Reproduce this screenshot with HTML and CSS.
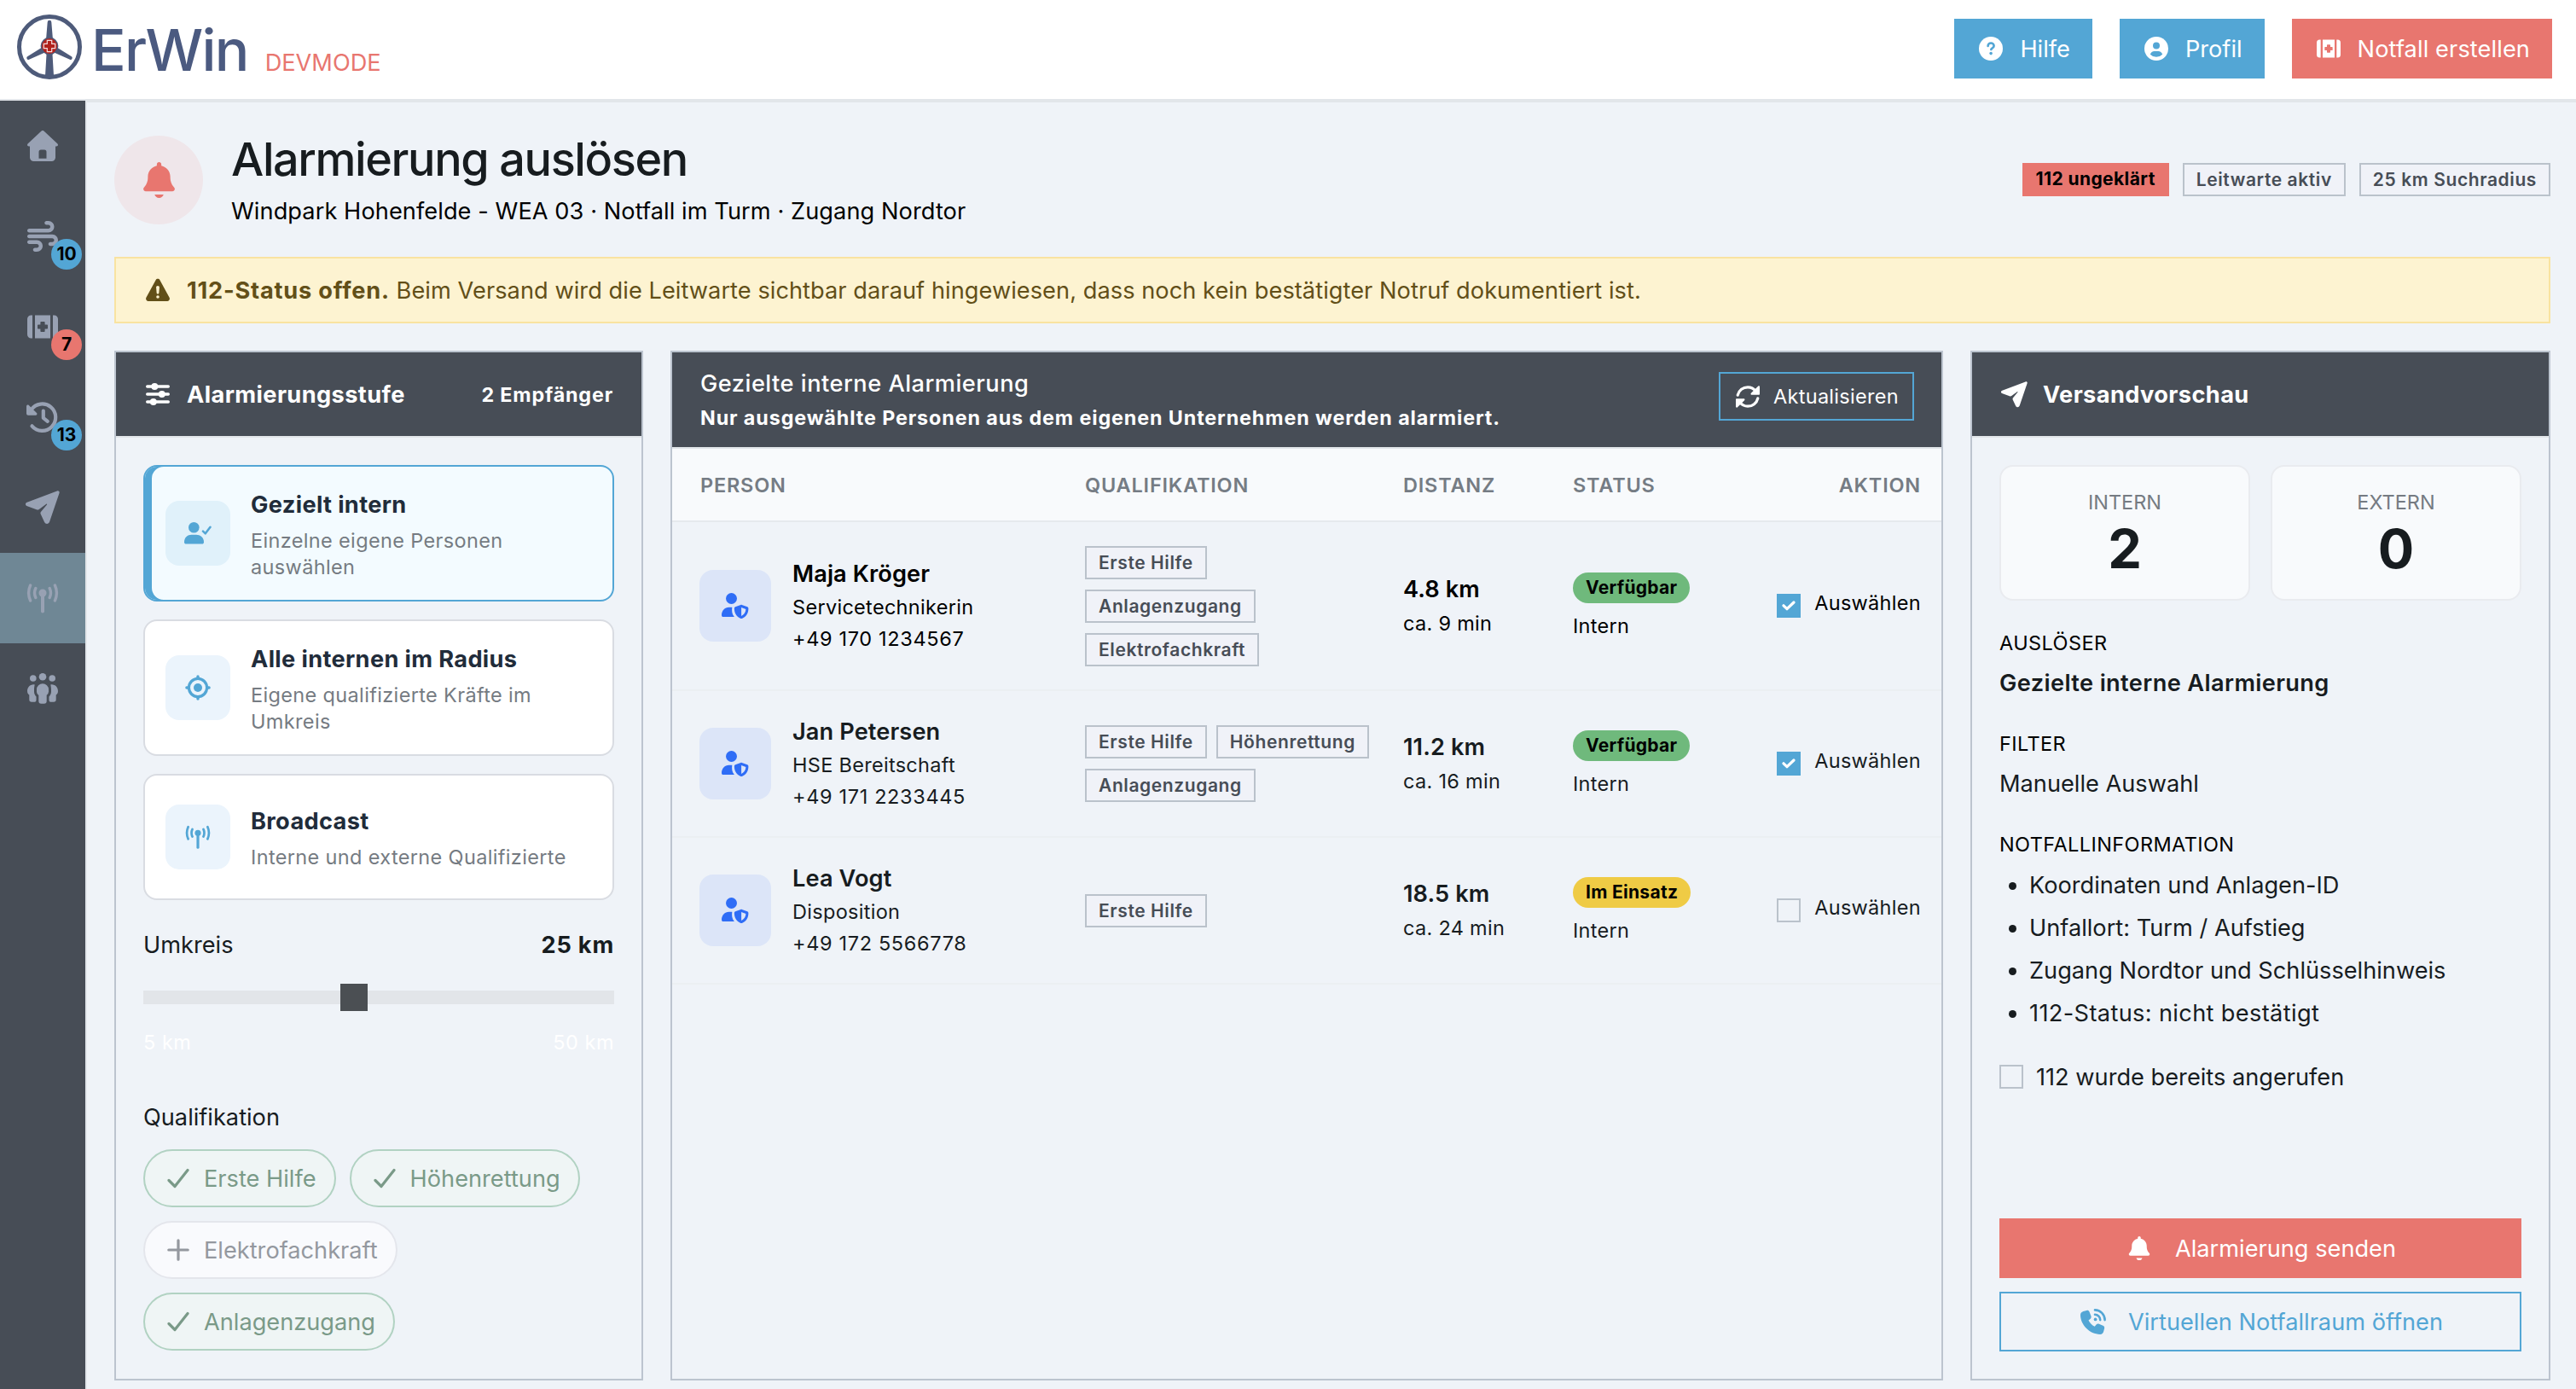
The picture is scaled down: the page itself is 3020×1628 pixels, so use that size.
FILE: index.html
```html
<!DOCTYPE html>
<html lang="de">
<head>
  <meta charset="UTF-8" />
  <meta name="viewport" content="width=device-width, initial-scale=1" />
  <title>ErWin - Alarmierung auslösen</title>
  <link rel="stylesheet" href="styles.css">
</head>
<body>

  <!-- Icons -->
  <svg class="sprite" xmlns="http://www.w3.org/2000/svg">
    <symbol id="i-bell" viewBox="0 0 448 512"><path d="M224 0c-17.7 0-32 14.3-32 32V51.2C119 66 64 130.6 64 208v18.8c0 47-17.3 92.4-48.5 127.6l-7.4 8.3c-8.4 9.4-10.4 22.9-5.3 34.4S19.4 416 32 416H416c12.6 0 24-7.4 29.2-18.9s3.1-25-5.3-34.4l-7.4-8.3C401.3 319.2 384 273.9 384 226.8V208c0-77.4-55-142-128-156.8V32c0-17.7-14.3-32-32-32zM288 464H160c7 28 32 48 64 48s57-20 64-48z"/></symbol>
    <symbol id="i-home" viewBox="0 0 36 36"><path fill-rule="evenodd" d="M16.6.6a2 2 0 0 1 2.8 0l15.8 14.7c1.5 1.4.6 3.2-1 3.2H33V31.500a4.500 4.500 0 0 1-4.500 4.500h-21A4.500 4.500 0 0 1 3 31.500V18.500H1.800c-1.600 0-2.500-1.800-1-3.200zM16 22.500a2.500 2.500 0 0 0-2.500 2.500v7.700h9V25a2.500 2.500 0 0 0-2.500-2.500z"/></symbol>
    <symbol id="i-wind" viewBox="0 0 512 512"><path d="M288 32c0 17.700 14.300 32 32 32h32c17.700 0 32 14.300 32 32s-14.300 32-32 32H32c-17.700 0-32 14.300-32 32s14.300 32 32 32H352c53 0 96-43 96-96s-43-96-96-96H320c-17.700 0-32 14.300-32 32zm64 352c0 17.700 14.300 32 32 32h32c53 0 96-43 96-96s-43-96-96-96H32c-17.700 0-32 14.300-32 32s14.300 32 32 32H416c17.700 0 32 14.300 32 32s-14.300 32-32 32H384c-17.700 0-32 14.300-32 32zM128 512h32c53 0 96-43 96-96s-43-96-96-96H32c-17.700 0-32 14.300-32 32s14.300 32 32 32H160c17.700 0 32 14.300 32 32s-14.300 32-32 32H128c-17.700 0-32 14.300-32 32s14.300 32 32 32z"/></symbol>
    <symbol id="i-kit" viewBox="0 0 36 36"><path fill-rule="evenodd" d="M6 4.500H4.500A4.500 4.500 0 0 0 0 9v18a4.500 4.500 0 0 0 4.500 4.500H6zM30 4.500h1.500A4.500 4.500 0 0 1 36 9v18a4.500 4.500 0 0 1-4.500 4.500H30zM9 4.500h18v27H9zM16.200 12a.8.8 0 0 0-.8.8v2.600h-2.600a.8.8 0 0 0-.8.8v3.600c0 .5.300.8.8.8h2.600v2.600c0 .5.300.8.8.8h3.600c.5 0 .8-.3.8-.8v-2.600h2.600c.5 0 .8-.3.8-.8v-3.600a.8.8 0 0 0-.8-.8h-2.600v-2.600a.8.8 0 0 0-.8-.8z"/></symbol>
    <symbol id="i-history" viewBox="0 0 38 36"><g fill="none" stroke="currentColor" stroke-width="4.200" stroke-linecap="round" stroke-linejoin="round"><path d="M6.500 28.300a15.700 15.700 0 1 0-.8-19.200L3 13"/><path d="M19.800 10.500v8.300l5 4"/></g><path d="M0 5.200c0-1.500 1.800-2.200 2.800-1.200L12 13c1 1 .3 2.800-1.200 2.800H2a2 2 0 0 1-2-2z"/></symbol>
    <symbol id="i-plane" viewBox="0 0 40 40"><path d="M36.900.5c1.800-.7 3.200.7 2.600 2.400l-11.400 33.600c-1 3-4.600 3.200-6 .5l-4.400-9.400c-.5-1-.3-2 .4-2.900l6.900-8.200c.4-.6-.1-1.200-.8-.8l-8.400 6.300c-.9.7-2 .8-3 .3L1.300 18c-2-1-1.700-3.500.4-4.200z"/></symbol>
    <symbol id="i-antenna" viewBox="0 0 38 38"><circle cx="19" cy="13" r="4.500"/><path fill="none" stroke="currentColor" stroke-width="4" stroke-linecap="round" d="M19 14v20.500"/><path fill="none" stroke="currentColor" stroke-width="3.400" stroke-linecap="round" d="M4.600 4a22 22 0 0 0 0 18M10.800 7.500a13 13 0 0 0 0 11M33.400 4a22 22 0 0 1 0 18M27.200 7.500a13 13 0 0 1 0 11"/></symbol>
    <symbol id="i-group" viewBox="0 0 36 36"><circle cx="18" cy="4.300" r="4.300"/><circle cx="6.800" cy="6" r="3.800"/><circle cx="29.200" cy="6" r="3.800"/><path d="M18 12.300a7 7 0 0 0-7 7v2.200c0 1.800.9 3.300 2.300 4.200v7.100a3 3 0 0 0 3 3h3.400a3 3 0 0 0 3-3v-7.100a5 5 0 0 0 2.300-4.200v-2.200a7 7 0 0 0-7-7zM8.700 13.400C3.600 12.600 0 16.500 0 21c0 2 .9 3.600 2.300 4.500V31a2.800 2.800 0 0 0 2.800 2.800h2.800a2.600 2.600 0 0 0 2.600-2.600v-3.800C8.900 26 8 23.800 8 21.500v-2.200c0-2.200.4-4.300.7-5.900zM27.300 13.400c5.100-.8 8.700 3.100 8.700 7.600 0 2-.9 3.600-2.300 4.500V31a2.800 2.800 0 0 1-2.800 2.800h-2.800a2.600 2.600 0 0 1-2.600-2.600v-3.800c1.600-1.400 2.500-3.600 2.500-5.900v-2.200c0-2.200-.4-4.300-.7-5.900z"/></symbol>
    <symbol id="i-help" viewBox="0 0 28 28"><circle cx="14" cy="14" r="14"/><path class="cut" d="M10.600 11c0-2.200 1.500-3.500 3.500-3.500s3.500 1.400 3.500 3.200c0 2.200-2.300 2.500-3.300 4.300" /><circle class="cut-dot" cx="14.100" cy="19.600" r="1.800"/></symbol>
    <symbol id="i-user" viewBox="0 0 28 28"><circle cx="14" cy="14" r="14"/><circle class="cut-dot" cx="14" cy="10.500" r="4"/><path class="cut-dot" d="M6.800 20.800c.8-2.600 2.600-3.900 5-3.900h4.400c2.400 0 4.200 1.300 5 3.900a10 10 0 0 1-14.400 0z"/></symbol>
    <symbol id="i-warn" viewBox="0 0 28 28"><path fill-rule="evenodd" d="M14 .8c1 0 1.900.5 2.400 1.400l11.200 20.500c1 1.900-.3 4.300-2.400 4.300H2.800C.7 27-.6 24.600.4 22.700L11.600 2.200C12.100 1.300 13 .8 14 .8zM14 9c-1.200 0-2 .9-1.900 2l.5 6c.1 1 .7 1.500 1.400 1.500s1.300-.5 1.400-1.500l.5-6c.1-1.100-.7-2-1.900-2zM14 20.200a1.800 1.800 0 1 0 0 3.600 1.800 1.800 0 0 0 0-3.600z"/></symbol>
    <symbol id="i-sliders" viewBox="0 0 28 28"><path fill="none" stroke="currentColor" stroke-width="3.400" stroke-linecap="round" d="M1.700 5h24.600M1.700 14h24.600M1.700 23h24.600"/><circle cx="10.300" cy="5" r="4"/><circle cx="18.800" cy="14" r="4"/><circle cx="8.800" cy="23" r="4"/></symbol>
    <symbol id="i-usercheck" viewBox="0 0 32 26"><circle cx="11.300" cy="6.300" r="6.300"/><path d="M0 23.200C0 18 4 14.800 8.500 14.800h5.600c4.500 0 8.900 3.200 8.900 8.400 0 1.400-.8 2.300-2.200 2.300H2.200C.8 25.500 0 24.600 0 23.200z"/><path fill="none" stroke="currentColor" stroke-width="2.500" stroke-linecap="round" stroke-linejoin="round" d="M22 10.700l2.800 2.600 5.700-7.600"/></symbol>
    <symbol id="i-target" viewBox="0 0 30 30"><circle cx="15" cy="15" r="5"/><circle cx="15" cy="15" r="10.600" fill="none" stroke="currentColor" stroke-width="3.200"/><path fill="none" stroke="currentColor" stroke-width="3.400" stroke-linecap="round" d="M15 1.900v2M15 26.100v2M1.900 15h2M26.100 15h2"/></symbol>
    <symbol id="i-shield" viewBox="0 0 32 30"><circle cx="11.500" cy="6.500" r="6.500"/><path d="M13.200 28H2c-1.400 0-2-.9-2-2.100 0-4.800 3.600-9.100 8.600-9.100h3.700c-.5 4.300-.3 8 2.600 11.200z"/><path fill-rule="evenodd" d="M22.400 13.900c.5-.2.900-.2 1.400 0l6.400 2.300c.8.300 1.200.9 1.200 1.700.1 5.300-2.300 9.800-7.500 12.100-.5.200-1 .2-1.500 0-5.100-2.300-7.600-6.800-7.500-12.100 0-.8.500-1.400 1.200-1.700zM23.100 17v10c3.300-1.700 5.100-4.300 5.300-8z"/></symbol>
    <symbol id="i-refresh" viewBox="0 0 28 26"><g fill="none" stroke="currentColor" stroke-width="3.200" stroke-linecap="round"><path d="M2.200 11.200C3.500 5.500 8.500 1.800 14 1.800c4 0 7.300 2 9.400 4.800M25.800 14.800c-1.300 5.700-6.300 9.400-11.800 9.400-4 0-7.300-2-9.400-4.800"/></g><path d="M28 1.400v8.400c0 .6-.4 1-1 1h-8.300c-1.100 0-1.600-1.300-.8-2l8.400-8.200c.6-.6 1.700-.2 1.700.8zM0 24.600v-8.400c0-.6.400-1 1-1h8.300c1.100 0 1.600 1.300.8 2l-8.400 8.200c-.6.600-1.700.2-1.700-.8z"/></symbol>
    <symbol id="i-check" viewBox="0 0 26 24"><path fill="none" stroke="currentColor" stroke-width="3.200" stroke-linecap="round" stroke-linejoin="round" d="M2 14.500l7 7L24 2.500"/></symbol>
    <symbol id="i-tick" viewBox="0 0 16 12"><path fill="none" stroke="currentColor" stroke-width="3.200" stroke-linecap="round" stroke-linejoin="round" d="M2 5.800l4 3.900L14 2"/></symbol>
    <symbol id="i-plus" viewBox="0 0 26 26"><path fill="none" stroke="currentColor" stroke-width="3.200" stroke-linecap="round" d="M13 1.800v22.400M1.800 13h22.400"/></symbol>
    <symbol id="i-phone" viewBox="0 0 30 30"><path d="M7.300 1.900c1.400-.4 2.700.3 3.200 1.600l2 5c.4 1.200.1 2.400-.8 3.200l-2.200 1.800c1.700 3.300 4 5.700 7.200 7.300l1.900-2.200c.8-1 2-1.300 3.200-.8l4.700 2c1.300.6 2 1.900 1.600 3.200l-1 3.700c-.5 1.900-1.800 3.200-4 3.200C10.600 29.800.2 18.900 0 7.300 0 5.300 1.400 3.700 3.300 3.100z"/><g fill="none" stroke="currentColor" stroke-width="2.600" stroke-linecap="round"><path d="M17 1.400a11.700 11.700 0 0 1 11.600 11.700M17 6.800a6.300 6.300 0 0 1 6.200 6.300"/></g><circle cx="17.600" cy="12.400" r="1.900"/></symbol>
  </svg>

  <header class="topbar">
    <div class="logo">
      <svg class="logo-mark" viewBox="0 0 76 76">
        <circle cx="38" cy="38" r="35.500" fill="none" stroke="#4e5b7a" stroke-width="5"/>
        <path fill="#4e5b7a" d="M35.700 9a2.300 2.300 0 0 1 4.600 0l1.900 23h-8.400zM33 72l2-34h6l2 34-5 2zM31 37.500L12.500 49a2 2 0 0 0 1.600 3.700L35 43.500zM45 37.500L63.500 49a2 2 0 0 1-1.600 3.700L41 43.500z"/>
        <circle cx="38" cy="37" r="10.400" fill="#4e5b7a"/>
        <circle cx="38" cy="37" r="9" fill="#b1221c"/>
        <path fill="none" stroke="#f3dcdc" stroke-width="1.200" d="M35.300 30.300h5.400v4h4v5.400h-4v4h-5.400v-4h-4v-5.400h4z"/>
      </svg>
      <span class="logo-text">ErWin</span>
      <span class="logo-mode">DEVMODE</span>
    </div>
    <nav>
      <a class="btn btn-blue"><svg class="icon"><use href="#i-help"/></svg>Hilfe</a>
      <a class="btn btn-blue"><svg class="icon"><use href="#i-user"/></svg>Profil</a>
      <a class="btn btn-red"><svg class="icon"><use href="#i-kit"/></svg>Notfall erstellen</a>
    </nav>
  </header>

  <div class="layout">
    <aside class="sidebar">
      <a><svg><use href="#i-home"/></svg></a>
      <a><svg><use href="#i-wind"/></svg><span class="count">10</span></a>
      <a><svg><use href="#i-kit"/></svg><span class="count red">7</span></a>
      <a><svg class="wide"><use href="#i-history"/></svg><span class="count">13</span></a>
      <a><svg class="plane"><use href="#i-plane"/></svg></a>
      <a class="active"><svg class="wide"><use href="#i-antenna"/></svg></a>
      <a><svg><use href="#i-group"/></svg></a>
    </aside>

    <main>
      <div class="page-head">
        <div class="head-icon"><svg><use href="#i-bell"/></svg></div>
        <div class="head-text">
          <h1>Alarmierung auslösen</h1>
          <p>Windpark Hohenfelde - WEA 03 · Notfall im Turm · Zugang Nordtor</p>
        </div>
        <div class="head-tags">
          <span class="tag tag-red">112 ungeklärt</span>
          <span class="tag">Leitwarte aktiv</span>
          <span class="tag">25 km Suchradius</span>
        </div>
      </div>

      <div class="alert">
        <svg><use href="#i-warn"/></svg>
        <p><strong>112-Status offen.</strong> Beim Versand wird die Leitwarte sichtbar darauf hingewiesen, dass noch kein bestätigter Notruf dokumentiert ist.</p>
      </div>

      <div class="columns">
        <!-- Alarmierungsstufe -->
        <section class="panel">
          <div class="panel-head">
            <svg class="icon"><use href="#i-sliders"/></svg>
            <h2>Alarmierungsstufe</h2>
            <strong>2 Empfänger</strong>
          </div>
          <div class="panel-body">
            <div class="level selected">
              <div class="level-icon"><svg class="i-uc"><use href="#i-usercheck"/></svg></div>
              <div><h3>Gezielt intern</h3><p>Einzelne eigene Personen<br>auswählen</p></div>
            </div>
            <div class="level">
              <div class="level-icon"><svg><use href="#i-target"/></svg></div>
              <div><h3>Alle internen im Radius</h3><p>Eigene qualifizierte Kräfte im<br>Umkreis</p></div>
            </div>
            <div class="level small">
              <div class="level-icon"><svg><use href="#i-antenna"/></svg></div>
              <div><h3>Broadcast</h3><p>Interne und externe Qualifizierte</p></div>
            </div>

            <div class="range-head"><span>Umkreis</span><strong>25 km</strong></div>
            <div class="slider"><div class="thumb"></div></div>
            <div class="range-labels"><span>5 km</span><span>50 km</span></div>

            <div class="label">Qualifikation</div>
            <div class="chips">
              <span class="chip on"><svg><use href="#i-check"/></svg>Erste Hilfe</span>
              <span class="chip on"><svg><use href="#i-check"/></svg>Höhenrettung</span>
              <span class="chip"><svg><use href="#i-plus"/></svg>Elektrofachkraft</span>
              <span class="chip on"><svg><use href="#i-check"/></svg>Anlagenzugang</span>
            </div>
          </div>
        </section>

        <!-- Personen -->
        <section class="panel">
          <div class="panel-head list-head">
            <div>
              <h2>Gezielte interne Alarmierung</h2>
              <strong>Nur ausgewählte Personen aus dem eigenen Unternehmen werden alarmiert.</strong>
            </div>
            <a class="btn-refresh"><svg><use href="#i-refresh"/></svg>Aktualisieren</a>
          </div>
          <div class="row row-head">
            <span>PERSON</span><span>QUALIFIKATION</span><span>DISTANZ</span><span>STATUS</span><span class="right">AKTION</span>
          </div>
          <div class="row first">
            <div class="person">
              <div class="avatar"><svg><use href="#i-shield"/></svg></div>
              <div><b>Maja Kröger</b><p>Servicetechnikerin</p><p class="tel">+49 170 1234567</p></div>
            </div>
            <div class="tags"><span class="tag">Erste Hilfe</span><span class="tag">Anlagenzugang</span><span class="tag">Elektrofachkraft</span></div>
            <div class="dist"><b>4.8 km</b><p>ca. 9 min</p></div>
            <div class="status"><span class="pill">Verfügbar</span><p>Intern</p></div>
            <label class="pick"><i class="box checked"><svg><use href="#i-tick"/></svg></i><span>Auswählen</span></label>
          </div>
          <div class="row">
            <div class="person">
              <div class="avatar"><svg><use href="#i-shield"/></svg></div>
              <div><b>Jan Petersen</b><p>HSE Bereitschaft</p><p class="tel">+49 171 2233445</p></div>
            </div>
            <div class="tags"><span class="tag">Erste Hilfe</span><span class="tag">Höhenrettung</span><span class="tag">Anlagenzugang</span></div>
            <div class="dist"><b>11.2 km</b><p>ca. 16 min</p></div>
            <div class="status"><span class="pill">Verfügbar</span><p>Intern</p></div>
            <label class="pick"><i class="box checked"><svg><use href="#i-tick"/></svg></i><span>Auswählen</span></label>
          </div>
          <div class="row">
            <div class="person">
              <div class="avatar"><svg><use href="#i-shield"/></svg></div>
              <div><b>Lea Vogt</b><p>Disposition</p><p class="tel">+49 172 5566778</p></div>
            </div>
            <div class="tags"><span class="tag">Erste Hilfe</span></div>
            <div class="dist"><b>18.5 km</b><p>ca. 24 min</p></div>
            <div class="status"><span class="pill yellow">Im Einsatz</span><p>Intern</p></div>
            <label class="pick"><i class="box"></i><span>Auswählen</span></label>
          </div>
        </section>

        <!-- Versandvorschau -->
        <section class="panel">
          <div class="panel-head preview-head">
            <svg class="icon"><use href="#i-plane"/></svg>
            <h2>Versandvorschau</h2>
          </div>
          <div class="panel-body">
            <div class="counts">
              <div><span>INTERN</span><b>2</b></div>
              <div><span>EXTERN</span><b>0</b></div>
            </div>
            <div class="info"><h4>AUSLÖSER</h4><p><b>Gezielte interne Alarmierung</b></p></div>
            <div class="info"><h4>FILTER</h4><p>Manuelle Auswahl</p></div>
            <div class="info">
              <h4>NOTFALLINFORMATION</h4>
              <ul>
                <li>Koordinaten und Anlagen-ID</li>
                <li>Unfallort: Turm / Aufstieg</li>
                <li>Zugang Nordtor und Schlüsselhinweis</li>
                <li class="state">112-Status: nicht bestätigt</li>
              </ul>
            </div>
            <label class="called"><i class="box"></i>112 wurde bereits angerufen</label>
            <div class="actions">
              <a class="btn btn-red"><svg class="icon"><use href="#i-bell"/></svg>Alarmierung senden</a>
              <a class="btn btn-outline"><svg class="icon phone"><use href="#i-phone"/></svg>Virtuellen Notfallraum öffnen</a>
            </div>
          </div>
        </section>
      </div>
    </main>
  </div>

</body>
</html>
```
FILE: styles.css
```css
* {
  box-sizing: border-box;
}
body {
  font-family: Inter, "Liberation Sans", sans-serif;
  font-size: 27.2px;
  margin: 0;
  height: 1628px;
  overflow: hidden;
  background: #eff3f8;
  color: #171c1f;
}
h1, h2, h3, h4, p, ul {
  margin: 0;
  padding: 0;
}
svg {
  fill: currentColor;
  flex: none;
}
.sprite {
  display: none;
}

/* Header */
.topbar {
  height: 120px;
  background: #fff;
  border-bottom: 4px solid #e2e6ea;
  display: flex;
  justify-content: space-between;
  padding: 0 28px 0 20px;
}
.logo {
  display: flex;
  align-items: baseline;
}
.logo-mark {
  width: 76px;
  height: 76px;
  align-self: flex-start;
  margin-top: 17px;
}
.logo-text {
  font-size: 67.5px;
  font-weight: 500;
  color: #4b5a80;
  line-height: 117px;
  margin-left: 11px;
  letter-spacing: -1.7px;
}
.logo-mode {
  color: #e8766f;
  margin-left: 20px;
}
nav {
  display: flex;
  gap: 32px;
  padding-top: 22px;
}
.btn {
  height: 70px;
  display: flex;
  align-items: center;
  color: #fff;
}
nav .btn {
  padding: 0 26px 0 29px;
  gap: 20px;
}
nav .btn-red {
  letter-spacing: 0.1px;
}
.icon {
  width: 28px;
  height: 28px;
}
.btn-blue {
  background: #53a6d5;
}
.btn-red {
  background: #e8766f;
}
.cut {
  fill: none;
  stroke: #53a6d5;
  stroke-width: 2.6px;
  stroke-linecap: round;
}
.cut-dot {
  fill: #53a6d5;
}

/* Sidebar */
.layout {
  display: flex;
}
.sidebar {
  width: 102px;
  height: 1510px;
  margin-top: -2px;
  background: #474d56;
  border-right: 2px solid #e2e6ea;
  color: #98a1b3;
}
.sidebar a {
  height: 106px;
  display: flex;
  align-items: center;
  justify-content: center;
  position: relative;
}
.sidebar a.active {
  background: #6f8795;
}
.sidebar svg {
  width: 36px;
  height: 36px;
}
.sidebar svg.wide {
  width: 38px;
  height: 38px;
}
.sidebar svg.plane {
  width: 40px;
  height: 40px;
}
.count {
  position: absolute;
  left: 60px;
  top: 56px;
  width: 36px;
  height: 36px;
  border-radius: 50%;
  background: #53a6d5;
  color: #000;
  font-size: 21px;
  font-weight: 700;
  line-height: 36px;
  text-align: center;
}
.count.red {
  background: #e8766f;
}

/* Page head */
main {
  flex: 1;
  padding: 33px 30px 0 32px;
}
.page-head {
  display: flex;
  align-items: center;
  height: 115px;
}
.head-icon {
  width: 104px;
  height: 104px;
  border-radius: 50%;
  background: #efe6ea;
  color: #e8766f;
  display: flex;
  align-items: center;
  justify-content: center;
}
.head-icon svg {
  width: 37px;
  height: 42px;
}
.head-text {
  margin-left: 33px;
  flex: 1;
}
h1 {
  font-size: 54px;
  font-weight: 500;
  line-height: 67px;
  letter-spacing: -1.4px;
}
.head-text p {
  line-height: 40px;
  margin-top: 8px;
  color: #000;
  letter-spacing: 0.07px;
}
.head-tags {
  display: flex;
  gap: 16px;
}
.tag {
  height: 39px;
  line-height: 35px;
  border: 2px solid #bac2cb;
  background: #f0f2f8;
  color: #474d56;
  font-size: 21px;
  font-weight: 600;
  letter-spacing: 0.6px;
  padding: 0 14px;
}
.tag-red {
  background: #e8766f;
  border-color: #e8766f;
  color: #000;
  font-weight: 700;
  letter-spacing: 0.4px;
  line-height: 33px;
}

.alert {
  margin-top: 33px;
  height: 78px;
  border: 2px solid #f9e3a1;
  background: #fdf3d1;
  color: #624f18;
  display: flex;
  align-items: center;
  padding-left: 35px;
}
.alert svg {
  width: 28px;
  height: 28px;
}
.alert p {
  margin-left: 20px;
  letter-spacing: 0.05px;
}
.alert strong {
  letter-spacing: 0.8px;
}

/* Panels */
.columns {
  margin-top: 32px;
  display: grid;
  grid-template-columns: 620px 1492px 680px;
  gap: 32px;
  height: 1207px;
}
.panel {
  border: 2px solid #bcc4cf;
  display: flex;
  flex-direction: column;
}
.panel-head {
  height: 100px;
  background: #474d56;
  color: #fff;
  border-bottom: 2px solid #e2e6ea;
  display: flex;
  align-items: center;
  padding: 0 33px 0 35px;
}
.panel-head h2 {
  font-size: 27.2px;
  font-weight: 700;
  letter-spacing: 0.4px;
  margin-left: 20px;
  flex: 1;
}
.panel-head strong {
  font-size: 23.3px;
  letter-spacing: 0.85px;
}
.panel-body {
  flex: 1;
  display: flex;
  flex-direction: column;
  padding: 32px;
}

.level {
  height: 160px;
  margin-bottom: 21px;
  border: 2px solid #d9dce2;
  border-radius: 16px;
  background: #fff;
  display: flex;
  align-items: center;
  gap: 24px;
  padding-left: 24px;
}
.level.small {
  height: 148px;
  margin-bottom: 0;
}
.level.selected {
  border-color: #53a6d5;
  background: #f3fbff;
  box-shadow: inset 8px 0 0 #53a6d5;
}
.level-icon {
  width: 76px;
  height: 76px;
  border-radius: 16px;
  background: #ebf4fc;
  color: #53a6d5;
  display: flex;
  align-items: center;
  justify-content: center;
}
.level-icon svg {
  width: 30px;
  height: 30px;
}
.level-icon svg.i-uc {
  width: 32px;
  height: 26px;
}
.selected .level-icon {
  background: #e0f1fa;
}
.level h3 {
  font-size: 27.2px;
  font-weight: 700;
  letter-spacing: 0.35px;
  line-height: 42px;
  color: #212c3a;
}
.level p {
  font-size: 23.5px;
  line-height: 31px;
  margin-top: 5px;
  color: #757b82;
  letter-spacing: 0.35px;
}

.range-head {
  display: flex;
  justify-content: space-between;
  line-height: 40px;
  margin-top: 33px;
}
.range-head strong {
  letter-spacing: 0.8px;
}
.slider {
  height: 16px;
  margin: 33px 0 27px;
  background: #e2e5e9;
}
.thumb {
  width: 32px;
  height: 32px;
  background: #4b4f53;
  position: relative;
  left: 231px;
  top: -8px;
}
.range-labels {
  display: flex;
  justify-content: space-between;
  color: #fff;
  font-size: 23.5px;
  line-height: 36px;
  letter-spacing: 0.5px;
}
.label {
  margin-top: 50px;
  line-height: 40px;
}
.chips {
  display: flex;
  flex-wrap: wrap;
  gap: 16px;
  margin-top: 17px;
}
.chip {
  height: 68px;
  border: 2px solid #e4e6ec;
  border-radius: 34px;
  background: #f9fafd;
  color: #94989f;
  display: flex;
  align-items: center;
  padding: 0 21px 0 26px;
}
.chip svg {
  width: 26px;
  height: 26px;
  margin-right: 17px;
}
.chip.on {
  border-color: #b1d2c2;
  background: #eff5f5;
  color: #7a9a88;
}

/* Person list */
.list-head {
  height: 113px;
  align-items: flex-start;
  justify-content: space-between;
  padding: 18px 32px 0 33px;
}
.list-head h2 {
  font-weight: 500;
  letter-spacing: 0.5px;
  line-height: 38px;
  margin-left: 0;
}
.list-head strong {
  display: block;
  line-height: 36px;
  margin-top: 3px;
  letter-spacing: 0.9px;
}
.btn-refresh {
  display: flex;
  align-items: center;
  height: 57px;
  margin-top: 5px;
  border: 2px solid #53a6d5;
  padding: 0 16px 0 18px;
  font-size: 23.5px;
  letter-spacing: 0.3px;
}
.btn-refresh svg {
  width: 28px;
  height: 26px;
  margin-right: 16px;
}
.row {
  display: grid;
  grid-template-columns: 451px 373px 199px 200px 1fr;
  align-items: center;
  height: 172px;
  border-bottom: 2px solid #ebeff2;
  padding: 0 24px 0 33px;
  font-size: 23.5px;
  letter-spacing: 0.3px;
}
.row.first {
  height: 198px;
  color: #000;
}
.row-head {
  height: 86px;
  background: #f8fafc;
  border-bottom-color: #e5e9ed;
  color: #757c84;
  font-weight: 600;
  letter-spacing: 0.8px;
}
.right {
  text-align: right;
}
.row b {
  display: block;
  font-size: 27.2px;
  font-weight: 600;
  line-height: 40px;
  letter-spacing: 0.1px;
}
.row p {
  line-height: 37px;
}
.row .tel {
  letter-spacing: 0.65px;
}
.person {
  display: flex;
  align-items: center;
  gap: 25px;
  margin-left: -1px;
}
.avatar {
  width: 84px;
  height: 84px;
  border-radius: 16px;
  background: #dce5f8;
  color: #2f6df6;
  display: flex;
  align-items: center;
  justify-content: center;
}
.avatar svg {
  width: 32px;
  height: 30px;
}
.tags {
  display: flex;
  flex-wrap: wrap;
  gap: 12px 11px;
  padding-right: 32px;
}
.dist p {
  line-height: 39px;
}
.status {
  padding-top: 3px;
}
.status p {
  margin-top: 8px;
}
.pill {
  display: inline-block;
  vertical-align: top;
  height: 36px;
  line-height: 35px;
  border-radius: 18px;
  padding: 0 15px;
  background: #6fb97c;
  color: #000;
  font-size: 21px;
  font-weight: 700;
}
.pill.yellow {
  background: #efcb45;
}
.pick {
  display: flex;
  align-items: center;
  justify-content: flex-end;
}
.pick span {
  margin: 0 0 7px 16px;
}
.box {
  width: 28px;
  height: 28px;
  border: 2px solid #bac2cb;
  display: flex;
  align-items: center;
  justify-content: center;
}
.box.checked {
  background: #53a6d5;
  border-color: #53a6d5;
  color: #fff;
}
.box svg {
  width: 16px;
  height: 12px;
}

/* Preview */
.preview-head {
  padding-left: 34px;
}
.preview-head .icon {
  width: 31px;
  height: 31px;
}
.preview-head h2 {
  margin-left: 18px;
}
.counts {
  display: grid;
  grid-template-columns: 1fr 1fr;
  gap: 24px;
}
.counts div {
  height: 159px;
  border: 2px solid #e9ebef;
  border-radius: 16px;
  background: #f8fafc;
  text-align: center;
  padding-top: 24px;
}
.counts span {
  display: block;
  font-size: 23.5px;
  line-height: 36px;
  color: #757b82;
}
.counts b {
  display: block;
  font-size: 63px;
  line-height: 72px;
}
.info {
  margin-top: 32px;
}
.info h4 {
  font-size: 23.5px;
  font-weight: 400;
  line-height: 36px;
  color: #000;
  letter-spacing: 0.4px;
}
.info p {
  line-height: 42px;
  margin-top: 8px;
}
.info b {
  font-weight: 600;
  letter-spacing: 0.37px;
}
.info ul {
  padding-left: 35px;
  margin-top: 5px;
}
.info li {
  line-height: 50px;
}
.info .state {
  letter-spacing: 0.35px;
}
.called {
  display: flex;
  align-items: center;
  height: 28px;
  margin-top: 35px;
}
.called .box {
  margin-right: 15px;
}
.actions {
  margin-top: auto;
  display: flex;
  flex-direction: column;
  gap: 16px;
}
.actions .btn {
  justify-content: center;
  padding-left: 3px;
}
.actions .icon {
  margin-right: 28px;
}
.actions .phone {
  width: 30px;
  height: 30px;
  margin-right: 26px;
}
.btn-outline {
  border: 2px solid #53a6d5;
  color: #53a6d5;
}
```
